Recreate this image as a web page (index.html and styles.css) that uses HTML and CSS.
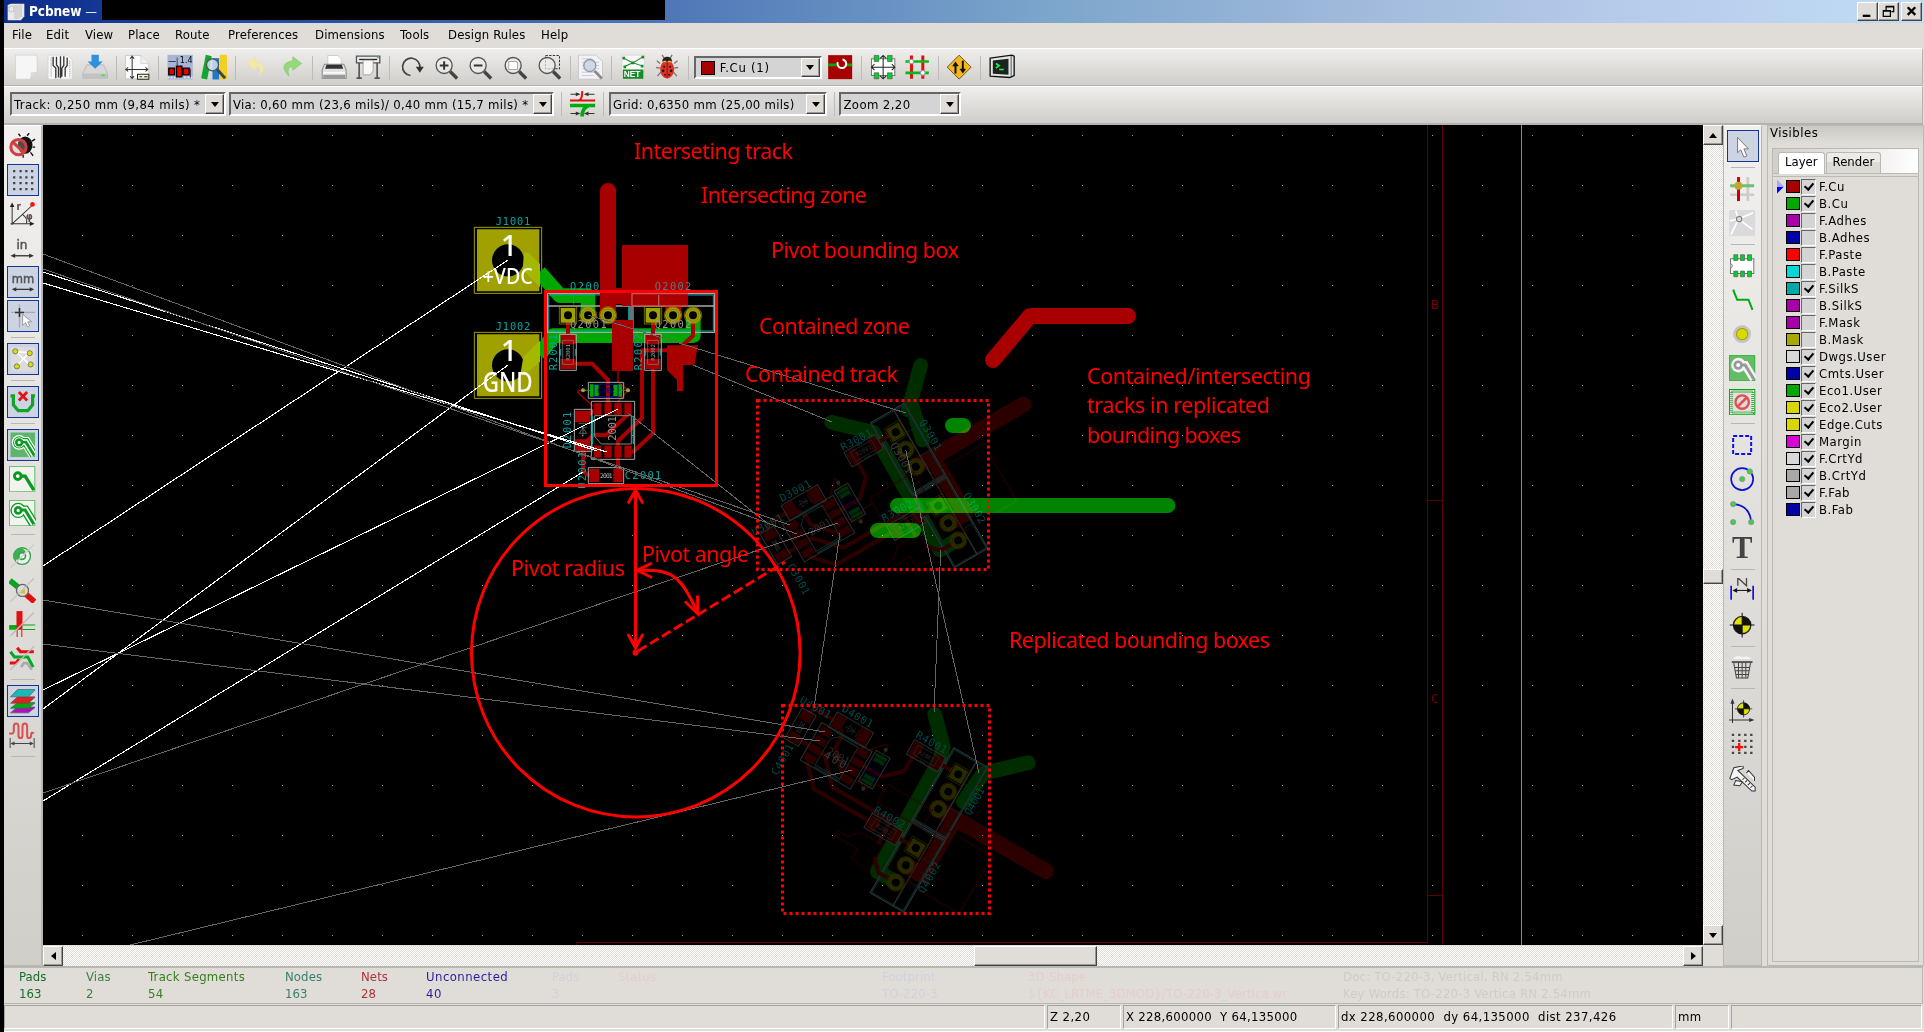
FILE: index.html
```html
<!DOCTYPE html>
<html lang="en">
<head>
<meta charset="utf-8">
<title>Pcbnew</title>
<link rel="stylesheet" href="styles.css">
</head>
<body>
<div class="window">
<header class="titlebar">
  <div class="caption"><svg class="app" viewBox="0 0 54 54"><path d="M2 6 12 2H52V40L42 52H2z" fill="#e9e9e9"/><path d="M24 6V48M30 6V48M36 6V46M42 4V42" stroke="#aaa" stroke-width="2"/><path d="M6 10H20V26H6z" fill="none" stroke="#999" stroke-width="2" stroke-dasharray="3 2"/></svg><b>Pcbnew</b> —</div>
  <div class="redacted"></div>
  <div class="winbtns">
    <span class="raised"><svg viewBox="0 0 20 18"><path d="M5 13.5h8" stroke="#000" stroke-width="2.4"/></svg></span>
    <span class="raised"><svg viewBox="0 0 20 18"><path d="M7.5 8V3.5h8V9H13M4.500 8H12v6H4.500zM7 4h9M4 8.500h8.500" fill="none" stroke="#000" stroke-width="1.300"/></svg></span>
    <span class="raised last"><svg viewBox="0 0 20 18"><path d="M6 4.500l8 8M14 4.500l-8 8" stroke="#000" stroke-width="2.400"/></svg></span>
  </div>
</header>
<nav class="menu"><span>File</span><span>Edit</span><span>View</span><span>Place</span><span>Route</span><span>Preferences</span><span>Dimensions</span><span>Tools</span><span>Design Rules</span><span>Help</span></nav>

<div class="bar main">
  <svg class="ic" viewBox="0 0 78 78"><path d="M7 3H72V54L52 75H7z" fill="#f6f6f6" stroke="#ccc" stroke-width="2"/><path d="M52 75Q56 60 54 56L72 54z" fill="#ddd" stroke="#bbb"/></svg>
  <svg class="ic" viewBox="0 0 78 78"><path d="M3 3H62L75 18V75H3z" fill="#fafafa" stroke="#ccc" stroke-width="2"/><path d="M18 8V34L26 42V72M28 8V32L34 40V70M40 6V72M50 6V34L44 42V68M60 10V34L54 42V68" fill="none" stroke="#333" stroke-width="4"/><path d="M68 20V70M12 10V70" stroke="#888" stroke-width="3" stroke-dasharray="3 3"/></svg>
  <svg class="ic" viewBox="0 0 78 78"><path d="M14 32H64L76 58V72H2V58z" fill="#d8d8d8" stroke="#aaa" stroke-width="2"/><path d="M3 58H75V73H3z" fill="#c2c2c2"/><path d="M28 2H50V22H62L39 44 16 22H28z" fill="#2f8fdd"/><path d="M58 64h10" stroke="#4d4" stroke-width="5"/></svg>
  <i class="sep"></i>
  <svg class="ic" viewBox="0 0 78 78"><path d="M4 4H50L74 28V74H4z" fill="#fbfbfb" stroke="#bbb" stroke-width="2"/><path d="M50 4V28H74" fill="#eee" stroke="#ccc" stroke-width="2"/><path d="M24 8V72M6 46H70M18 14l6-8 6 8M18 66l6 7 6-7M12 40l-7 6 7 6M64 40l7 6-7 6" fill="none" stroke="#333" stroke-width="3"/><path d="M40 60H74V75H40zM46 68h8M60 68h10" fill="#f4f4cf" stroke="#222" stroke-width="3"/></svg>
  <i class="sep"></i>
  <svg class="ic" viewBox="0 0 78 78"><rect x="1" y="2" width="76" height="74" fill="#a8b6d6"/><path d="M1 70H77" stroke="#eee" stroke-width="5" stroke-dasharray="5 5"/><path d="M4 22h22M30 10v24M70 44v26" stroke="#445" stroke-width="3"/><text x="38" y="26" class="tny">1.4</text><path d="M5 42H22V62H5zM28 36H44V68H28zM48 42H66V62H48z" fill="#e60000" stroke="#000" stroke-width="4"/></svg>
  <svg class="ic" viewBox="0 0 78 78"><path d="M14 2 32 6 18 76 0 72z" fill="#12a62e"/><path d="M34 12H54V76H34z" fill="#1f78d0"/><path d="M56 2H78V76H56z" fill="#f2cf24"/><circle cx="34" cy="32" r="18" fill="#cfe0f0" fill-opacity=".85" stroke="#555" stroke-width="4"/><path d="M48 46 72 72" stroke="#444" stroke-width="9"/></svg>
  <i class="sep"></i>
  <svg class="ic" viewBox="0 0 78 78"><path d="M34 8 8 28 34 48V36Q54 36 44 66 78 34 34 22z" fill="#f4e9a4" stroke="#eadd90"/></svg>
  <svg class="ic" viewBox="0 0 78 78"><path d="M44 8 70 28 44 48V38Q24 36 32 66 -2 28 44 20z" fill="#92da7a" stroke="#7cc866" stroke-width="2"/></svg>
  <i class="sep"></i>
  <svg class="ic" viewBox="0 0 78 78"><path d="M20 4H50L60 14V40H20z" fill="#fff" stroke="#bbb" stroke-width="2"/><path d="M10 30H68L75 48V72H3V48z" fill="#e2e2e2" stroke="#888" stroke-width="3"/><path d="M16 32H62L66 44H12z" fill="#333"/><path d="M6 56H72" stroke="#fff" stroke-width="4"/><path d="M6 62H72V73H6z" fill="#999"/></svg>
  <svg class="ic" viewBox="0 0 78 78"><path d="M4 6H74V26H4z" fill="#eee" stroke="#555" stroke-width="4"/><path d="M12 16H66" stroke="#222" stroke-width="4"/><path d="M24 18H54V50L46 62H24z" fill="#f8f8f8" stroke="#888" stroke-width="2"/><path d="M12 26V72M66 26V72M4 72H20M58 72H74" stroke="#555" stroke-width="5"/><circle cx="68" cy="10" r="3" fill="#3d3"/></svg>
  <i class="sep wide"></i>
  <svg class="ic" viewBox="0 0 78 78"><path d="M34 64A26 26 0 1 1 62 42" fill="none" stroke="#444" stroke-width="5"/><path d="M50 38H74L62 56z" fill="#333"/></svg>
  <svg class="ic" viewBox="0 0 78 78"><use href="#mag"/><path d="M20 34H46M33 21V47" stroke="#333" stroke-width="6"/></svg>
  <svg class="ic" viewBox="0 0 78 78"><use href="#mag"/><path d="M20 34H46" stroke="#333" stroke-width="6"/></svg>
  <svg class="ic" viewBox="0 0 78 78"><use href="#mag"/><path d="M20 22H42L46 26V46H20z" fill="#fff" stroke="#aaa" stroke-width="3"/></svg>
  <svg class="ic" viewBox="0 0 78 78"><path d="M28 4H70V44H28z" fill="none" stroke="#333" stroke-width="3" stroke-dasharray="7 4"/><use href="#mag"/></svg>
  <i class="sep thin"></i>
  <svg class="ic" viewBox="0 0 78 78"><path d="M4 3H56L76 22V75H4z" fill="#f2f3f7" stroke="#bbb" stroke-width="2"/><path d="M14 14H46M14 24H66M14 34H66M14 44H66M14 54H66M14 64H50" stroke="#ccd" stroke-width="3"/><circle cx="38" cy="34" r="18" fill="#c6d4ea" fill-opacity=".8" stroke="#999" stroke-width="4"/><path d="M52 50 74 73" stroke="#888" stroke-width="8"/></svg>
  <i class="sep"></i>
  <svg class="ic" viewBox="0 0 78 78"><path d="M5 3H73V75H5z" fill="#f7f7f7" stroke="#ccc" stroke-width="2"/><path d="M10 12 38 26 68 8M38 26 12 38M38 26 68 36" fill="none" stroke="#188a2a" stroke-width="3"/><path d="M7 8h8v8H7zM64 5h8v8h-8zM34 22h8v8h-8zM10 34h8v8h-8zM62 32h8v8h-8z" fill="#188a2a"/><path d="M8 46H70V74H8z" fill="#198a28"/><text x="11" y="69" class="net">NET</text></svg>
  <svg class="ic" viewBox="0 0 78 78"><path d="M18 28 8 20M18 42 6 40M20 54 10 66M60 28 70 20M60 42 72 40M58 54 68 66M30 12 24 2M48 12 54 2" stroke="#777" stroke-width="4"/><ellipse cx="39" cy="46" rx="21" ry="27" fill="#d83428"/><path d="M24 22A15 14 0 0 1 54 22z" fill="#222"/><path d="M28 22h8M42 22h8" stroke="#e8c030" stroke-width="4"/><path d="M39 26V72" stroke="#700" stroke-width="2"/><g fill="#311"><circle cx="30" cy="38" r="3"/><circle cx="48" cy="38" r="3"/><circle cx="27" cy="50" r="4"/><circle cx="51" cy="50" r="4"/><circle cx="33" cy="62" r="3"/><circle cx="45" cy="62" r="3"/></g></svg>
  <i class="sep"></i>
  <div class="combo lay"><span class="sw"></span><span class="t">F.Cu (1)</span><span class="raised dd"></span></div>
  <svg class="ic" viewBox="0 0 78 78"><path d="M3 3H75V75H3z" fill="#a80000"/><path d="M3 32H28M54 32H75" stroke="#0a0" stroke-width="8"/><path d="M32 24a13 13 0 1 0 14-8" fill="none" stroke="#fff" stroke-width="6"/></svg>
  <i class="sep"></i>
  <svg class="ic" viewBox="0 0 78 78"><path d="M4 14H74V64H4z" fill="#fff" stroke="#777" stroke-width="3"/><path class="gp" d="M12 4h14v18H12zM52 4h14v18H52zM12 56h14v18H12zM52 56h14v18H52z"/><path d="M39 4V74M4 39H74M30 13l9-9 9 9M30 65l9 9 9-9M13 30l-9 9 9 9M65 30l9 9-9 9" fill="none" stroke="#222" stroke-width="3"/></svg>
  <svg class="ic" viewBox="0 0 78 78"><path d="M22 4V74M56 4V74" stroke="#e01010" stroke-width="9"/><path d="M4 22H74M4 56H74" stroke="#0b1" stroke-width="8"/><circle cx="22" cy="22" r="7" fill="#fff" stroke="#999" stroke-width="3"/><circle cx="56" cy="56" r="7" fill="#fff" stroke="#999" stroke-width="3"/></svg>
  <i class="sep"></i>
  <svg class="ic" viewBox="0 0 78 78"><path d="M39 3 75 39 39 75 3 39z" fill="#f6b816" stroke="#222" stroke-width="2"/><path d="M28 58V30M50 20V48" stroke="#111" stroke-width="6"/><path d="M18 36 28 22 38 36zM40 44 50 58 60 44z" fill="#111"/></svg>
  <i class="sep"></i>
  <svg class="ic" viewBox="0 0 78 78"><path d="M3 12 68 3 75 6V64L62 70 3 66z" fill="#e6e6e6" stroke="#111" stroke-width="4"/><path d="M66 5V68" stroke="#111" stroke-width="2"/><path d="M11 19 58 14V62L11 59z" fill="#1c2420"/><path d="M20 28 30 34 20 42M30 46H44" fill="none" stroke="#2e4" stroke-width="5"/></svg>
</div>

<div class="bar aux">
  <div class="combo c1"><span class="t">Track: 0,250 mm (9,84 mils) *</span><span class="raised dd"></span></div>
  <div class="combo c2"><span class="t">Via: 0,60 mm (23,6 mils)/ 0,40 mm (15,7 mils) *</span><span class="raised dd"></span></div>
  <i class="sep"></i>
  <svg class="ic" viewBox="0 0 78 78"><path d="M4 9H30M48 9H76M4 67H30M48 67H76" stroke="#333" stroke-width="3"/><path d="M20 3 34 9 20 15zM58 3 44 9 58 15zM20 61 34 67 20 73zM58 61 44 67 58 73z" fill="#333"/><path d="M0 28H78M30 27Q40 24 39 0" stroke="#e01010" stroke-width="6" fill="none"/><path d="M0 43H78M58 44Q38 52 39 76" stroke="#0a1" stroke-width="11" fill="none"/></svg>
  <i class="sep"></i>
  <div class="combo c3"><span class="t">Grid: 0,6350 mm (25,00 mils)</span><span class="raised dd"></span></div>
  <i class="sep"></i>
  <div class="combo c4"><span class="t">Zoom 2,20</span><span class="raised dd"></span></div>
</div>

<main class="work">
<aside class="tools left">
  <svg class="ic" viewBox="0 0 78 78"><path d="M34 10 28 2M54 8 60 0M68 24 78 18M70 42H78M64 58 72 68M42 64V74" stroke="#111" stroke-width="4"/><ellipse cx="48" cy="36" rx="22" ry="26" fill="#111"/><circle cx="28" cy="42" r="23" fill="#bbb" fill-opacity=".35" stroke="#d04040" stroke-width="9"/><path d="M12 28 44 58" stroke="#d04040" stroke-width="9"/></svg>
  <svg class="ic on" viewBox="0 0 78 78"><g fill="#444"><path id="dr" d="M8 8h7v7H8zM28 8h7v7h-7zM46 8h7v7h-7zM64 8h7v7h-7z"/><use href="#dr" y="19"/><use href="#dr" y="37"/><use href="#dr" y="56"/></g></svg>
  <svg class="ic" viewBox="0 0 78 78"><path d="M9 72V12M4 68H70M9 68 68 14M40 40Q56 52 52 66" fill="none" stroke="#333" stroke-width="3"/><path d="M2 18 9 4 16 18zM62 61 76 68 62 75z" fill="#222"/><circle cx="70" cy="10" r="7" fill="#f11"/><text x="22" y="26" class="ri">r</text><text x="50" y="56" class="ri">φ</text></svg>
  <svg class="ic" viewBox="0 0 78 78"><text x="22" y="42" class="un">in</text><path d="M12 62H66" stroke="#333" stroke-width="4"/><path d="M4 62 18 55V69zM74 62 60 55V69z" fill="#333"/></svg>
  <svg class="ic on" viewBox="0 0 78 78"><text x="4" y="42" class="un" textLength="70">mm</text><path d="M12 62H66" stroke="#333" stroke-width="4"/><path d="M4 62 18 55V69zM74 62 60 55V69z" fill="#333"/></svg>
  <svg class="ic on" viewBox="0 0 78 78"><path d="M2 28H78M28 2V76" stroke="#aaa" stroke-width="4"/><path d="M14 28H42M28 14V42" stroke="#333" stroke-width="5"/><path d="M38 34V68L47 60 53 73 60 70 54 57H66z" fill="#fff" stroke="#777" stroke-width="2"/></svg>
  <i class="sep"></i>
  <svg class="ic on" viewBox="0 0 78 78"><rect x="1" y="1" width="76" height="76" rx="6" fill="#dcdcdc"/><path d="M16 16 62 58M58 20 20 60M16 16 60 20" stroke="#fff" stroke-width="5"/><g fill="#dede00" stroke="#777" stroke-width="3"><circle cx="15" cy="15" r="8"/><circle cx="60" cy="21" r="8"/><circle cx="20" cy="62" r="8"/><circle cx="63" cy="56" r="8"/></g></svg>
  <i class="sep"></i>
  <svg class="ic on" viewBox="0 0 78 78"><path d="M0 20H9V48L24 66H54L69 48V20H78" fill="none" stroke="#12a32a" stroke-width="10"/><path d="M26 8 52 34M52 8 26 34" stroke="#e01515" stroke-width="9"/></svg>
  <i class="sep"></i>
  <svg class="ic on" viewBox="0 0 78 78"><path d="M0 0H78V78H0z" fill="#5fb56a"/><circle cx="27" cy="31" r="23" fill="#fff"/><use href="#trk" stroke="#fff" stroke-width="32"/><circle cx="27" cy="31" r="19" fill="#0a9a22"/><use href="#trk" stroke="#0a9a22" stroke-width="25"/><circle cx="27" cy="31" r="16" fill="#fff"/><use href="#trk" stroke="#fff" stroke-width="18"/><use href="#trk" stroke="#0a9a22" stroke-width="9"/><circle cx="27" cy="31" r="9" fill="#fff" stroke="#0a9a22" stroke-width="8"/></svg>
  <svg class="ic" viewBox="0 0 78 78"><path d="M1 1H77V77H1z" fill="#f2f2ee" stroke="#1a2" stroke-width="2"/><use href="#trk" stroke="#0a9a22" stroke-width="10"/><circle cx="26" cy="30" r="10" fill="#fff" stroke="#0a9a22" stroke-width="9"/></svg>
  <svg class="ic" viewBox="0 0 78 78"><path d="M1 1H77V77H1z" fill="#f2f2ee" stroke="#1a2" stroke-width="2"/><circle cx="27" cy="31" r="23" fill="#0a9a22"/><use href="#trk" stroke="#0a9a22" stroke-width="28"/><circle cx="27" cy="31" r="19" fill="#fff"/><use href="#trk" stroke="#fff" stroke-width="20"/><use href="#trk" stroke="#0a9a22" stroke-width="9"/><circle cx="27" cy="31" r="9" fill="#fff" stroke="#0a9a22" stroke-width="8"/></svg>
  <i class="sep"></i>
  <svg class="ic" viewBox="0 0 78 78"><ellipse cx="39" cy="39" rx="25" ry="25" fill="#eee" stroke="#2fa545" stroke-width="4"/><path d="M39 15A24 24 0 0 0 15 50L30 50 50 25z" fill="#3fae52"/><circle cx="39" cy="39" r="10" fill="#fff" stroke="#2fa545" stroke-width="5"/><path d="M4 74 74 4" stroke="#ccc" stroke-width="4"/></svg>
  <svg class="ic" viewBox="0 0 78 78"><path d="M2 10 32 34" stroke="#0aa520" stroke-width="17"/><path d="M44 46 76 74" stroke="#e01010" stroke-width="17"/><circle cx="40" cy="40" r="18" fill="#ddd" stroke="#666" stroke-width="4"/><path d="M32 48 48 34V50z" fill="#d8c020"/><path d="M4 74 74 4" stroke="#bbb" stroke-width="3"/></svg>
  <svg class="ic" viewBox="0 0 78 78"><path d="M0 42H24V56H0z" fill="#0a1"/><path d="M22 0H40V56H22z" fill="#e01010"/><path d="M40 42H78M40 55H78" stroke="#0a1" stroke-width="3"/><path d="M24 56V78M38 56V78" stroke="#e01010" stroke-width="3"/><path d="M4 74 74 4" stroke="#bbb" stroke-width="4"/></svg>
  <svg class="ic" viewBox="0 0 78 78"><path d="M24 8 34 20H74M2 54H20L30 42" fill="none" stroke="#e01010" stroke-width="9"/><path d="M4 20 16 36H56L72 66" fill="none" stroke="#0a2" stroke-width="9"/><path d="M36 66 44 54H54L68 74" fill="none" stroke="#aaa" stroke-width="8"/><path d="M4 74 74 4" stroke="#bbb" stroke-width="4"/></svg>
  <i class="sep"></i>
  <svg class="ic on" viewBox="0 0 78 78"><g stroke="#555" stroke-width="2"><path d="M0 76 22 58H78L56 76z" fill="#b010c0"/><path d="M0 62 22 44H78L56 62z" fill="#0a1"/><path d="M0 46 22 26H78L56 46z" fill="#e02020"/><path d="M0 26 22 3H78L56 26z" fill="#1ab8b8"/></g></svg>
  <svg class="ic" viewBox="0 0 78 78"><path d="M0 34H10Q14 34 14 24V14Q14 4 21 4T28 14V40Q28 48 34 48T40 40V14Q40 4 47 4T54 14V40Q54 48 60 48T66 38 74 34" fill="none" stroke="#d85050" stroke-width="6"/><path d="M3 48V78M75 48V78M10 64H68" stroke="#444" stroke-width="3"/><path d="M4 64 16 58V70zM74 64 62 58V70z" fill="#444"/></svg>
  <i class="sep"></i>
</aside>

<section class="view">
<svg class="board" viewBox="43 125 1660 820">
<defs>
  <pattern id="dots" x="482" y="185" width="50" height="50" patternUnits="userSpaceOnUse"><rect width="1" height="1" fill="#a8a8a8"/></pattern>
  <g id="mag"><circle cx="33" cy="34" r="24" fill="#eee" fill-opacity=".7" stroke="#555" stroke-width="4"/><path d="M51 52 72 73" stroke="#444" stroke-width="10"/></g>
  <path id="trk" d="M28 30H48L74 72" fill="none"/>
  <g id="thru"><circle r="24" fill="#a0a000"/><circle r="26" fill="none" stroke="#a80" stroke-width="2"/><circle r="18" fill="none" stroke="#777400" stroke-width="2"/><circle r="12" fill="#000"/></g>
  <g id="sq"><path d="M-22-22H22V22H-22z" fill="#a0a000"/><path d="M-26-26H26V26H-26z" fill="none" stroke="#a0a000" stroke-width="2"/><circle r="12" fill="#000"/></g>
  <!-- resistor: two pads and outline, origin at centre -->
  <g id="res"><path d="M-22-52H22V-24H-22zM-22 20H22V50H-22z" fill="#a80000"/><path d="M-25-54H25V54H-25z" fill="none" stroke="#a8a8a8" stroke-width="3"/><path d="M-16-36H16V36H-16z" fill="none" stroke="#888" stroke-width="2"/><path d="M-22-10V10M22-10V10" stroke="#00a8a8" stroke-width="3"/></g>
  <g id="silk" fill="none">
    <path d="M262 371H510V487H262zM516 371H764V487H516z" stroke="#a8a8a8" stroke-width="4"/>
    <path d="M266 375H506V483H266zM520 375H760V483H520z" stroke="#00a8a8" stroke-width="3"/>
    <path d="M264 408H508M518 408H762" stroke="#a8a8a8" stroke-width="4"/><path d="M341 375V408M423 375V408M596 375V408M677 375V408" stroke="#00a8a8" stroke-width="2"/>
  </g>
  <g id="parts">
    <g fill="none" stroke="#a80000" stroke-width="12" stroke-linejoin="round" stroke-linecap="round">
      <path d="M324 436V510M324 581H396L444 630V715M579 436V500M579 590V790L520 845H504M620 541H546V744L474 813V915M699 450V497L668 526M504 733 438 795H400L369 825M369 840V905L385 915H400M369 740 412 718"/>
      <path stroke-width="4" d="M474 603V635L504 661 474 695V710M369 661H354V668L410 718"/>
    </g>
    <use href="#res" x="324" y="547"/><use href="#res" x="579" y="547"/>
    <path d="M345 722H390V757H345zM345 808H390V842H345zM388 897H417V936H388zM460 897H488V936H460z" fill="#a80000"/>
    <path d="M343 718H396V844H343zM385 893H491V941H385zM385 637H491V685H385z" fill="none" stroke="#a8a8a8" stroke-width="3"/>
    <path d="M356 760H382M369 765V800M358 772H380M358 790 369 774 380 790z" fill="none" stroke="#888" stroke-width="2"/>
    <path d="M402 699h22v36h-22zM433 699h22v36h-22zM463 699h22v36h-22zM493 699h22v36h-22zM402 827h22v36h-22zM433 827h22v36h-22zM463 827h22v36h-22zM493 827h22v36h-22z" fill="#a80000" stroke="#600000" stroke-width="2"/>
    <path d="M394 694H524V868H394z" fill="none" stroke="#a8a8a8" stroke-width="3"/>
    <path d="M397 737V822M520 737V822" stroke="#00a8a8" stroke-width="4"/><path d="M404 737H514V822H424L404 800z" fill="none" stroke="#888" stroke-width="3"/>
    <path d="M390 643H416V680H390zM460 643H486V680H460z" fill="#00a800"/><path d="M402 643H474V680H402z" fill="none" stroke="#0000a8" stroke-width="3"/><path d="M369 661H390M486 661H504" stroke="#00a800" stroke-width="3"/>
    <text x="412" y="668" class="k" fill="#0000a8" font-size="20" textLength="52">C2002</text>
    <circle cx="369" cy="661" r="6" fill="#aa9c50"/><circle cx="504" cy="661" r="6" fill="#aa9c50"/>
    <text x="420" y="923" class="k" fill="#bbb" font-size="19" textLength="38">2001</text>
    <text transform="translate(330 572) rotate(-90)" class="k" fill="#999" font-size="17" textLength="50">R2001</text>
    <text transform="translate(585 572) rotate(-90)" class="k" fill="#999" font-size="17" textLength="50">R2002</text>
    <text transform="translate(468 812) rotate(-90)" class="k" fill="#999" font-size="32" textLength="74">2001</text>
  </g>
  <g id="bigtracks" fill="none" stroke="#a80000" stroke-width="48" stroke-linecap="round" stroke-linejoin="round"><path d="M444 63V436M444 378H640V436"/></g>
  <g id="pins"><use href="#sq" x="324" y="436"/><use href="#thru" x="384" y="436"/><use href="#thru" x="444" y="436"/><use href="#sq" x="579" y="436"/><use href="#thru" x="639" y="436"/><use href="#thru" x="699" y="436"/></g>
  <!-- replicated channel, same parts with unfilled zones -->
  <g id="replica">
    <g transform="translate(460 170) scale(.33333)">
      <use href="#bigtracks"/><use href="#silk"/><use href="#parts"/><use href="#pins"/>
      <path d="M486 225H684V408H486zM456 450H519V603H456zM621 526H714L703 585H669V663H651V630L621 600z" fill="none" stroke="#a80000" stroke-width="7" stroke-dasharray="2 3"/>
    </g>
  </g>
</defs>
<rect x="43" y="125" width="1660" height="820" fill="#000"/>
<rect x="43" y="125" width="1660" height="820" fill="url(#dots)"/>
<g fill="none" stroke="#5c0000" shape-rendering="crispEdges"><path d="M1427.500 125V942.500H576.500V945M1442.500 125V945M1427 500.500H1442M1427 895.500H1442"/><path d="M1521.500 125V945" stroke="#888"/></g>
<text x="1431" y="309" class="k" fill="#780000" font-size="13">B</text><text x="1431" y="703" class="k" fill="#780000" font-size="13">C</text>

<!-- first replica -->
<g opacity=".27">
  <g transform="translate(740 340) scale(.33333)" fill="none" stroke="#00a800" stroke-width="44" stroke-linecap="round" stroke-linejoin="round"><path d="M542 76 512 185 548 300M512 185 505 210M275 247 400 277 600 630 650 600"/></g>
  <use href="#replica" transform="translate(2 6.700) rotate(60 635.500 652.500)"/>
</g>
<g class="k" fill="#004b4b" font-size="10.500">
  <text transform="translate(843 451) rotate(-28)" textLength="34">R3001</text><text transform="translate(782 502) rotate(-28)" textLength="34">D3001</text><text transform="translate(754 536) rotate(-28)" textLength="34">U3001</text><text transform="translate(787 566) rotate(60)" textLength="34">C3001</text><text transform="translate(919 422) rotate(60)" textLength="34">Q3001</text><text transform="translate(963 495) rotate(60)" textLength="34">Q3002</text><text transform="translate(884 522) rotate(-28)" textLength="34">R3002</text>
  <text transform="translate(890 445) rotate(60)" fill="#3c3c3c" textLength="34">Q3001</text>
</g>
<!-- second replica -->
<g opacity=".27">
  <g transform="translate(760 690) scale(.33333)" fill="none" stroke="#00a800" stroke-width="44" stroke-linecap="round" stroke-linejoin="round"><path d="M524 73 550 170 540 210 352 545 400 572M805 218 670 250 610 335"/></g>
  <use href="#replica" transform="translate(-3 11.700) rotate(120 635.500 652.500)"/>
</g>
<g class="k" fill="#004b4b" font-size="10.500">
  <text transform="translate(915 737) rotate(30)" textLength="34">R4001</text><text transform="translate(841 711) rotate(30)" textLength="34">D4001</text><text transform="translate(799 702) rotate(30)" textLength="34">U4001</text><text transform="translate(777 776) rotate(-60)" textLength="34">C4001</text><text transform="translate(970 816) rotate(-60)" textLength="30">Q4001</text><text transform="translate(924 894) rotate(-60)" textLength="34">Q4002</text><text transform="translate(873 812) rotate(30)" textLength="34">R4002</text>
  <text transform="translate(823 757) rotate(30)" fill="#3c3c3c" textLength="24">400</text>
</g>

<g fill="none" stroke="#008400" stroke-width="15" stroke-linecap="round" class="scr"><path d="M897.500 505.500H1168M952.500 425.500H963.500M877.500 530.500H913.500"/></g>
<path d="M993 360 1030 316H1128" fill="none" stroke="#a80000" stroke-width="16" stroke-linecap="round" stroke-linejoin="round"/>

<!-- connectors and source channel -->
<g transform="translate(460 170) scale(.33333)">
  <g id="conn"><path d="M43 172H245V370H43z" fill="none" stroke="#a0a000" stroke-width="3"/><path d="M51 178H238V364H51z" fill="#a0a000"/><circle cx="144" cy="271" r="48" fill="#000"/></g>
  <use href="#conn" y="315"/>
  <g fill="none" stroke="#00a800" stroke-width="44" stroke-linejoin="round"><path d="M238 306 300 377H384V436M238 556 280 497H700V436"/></g>
  <path d="M188 300 192 248H205L240 282V352z" fill="#a4b800"/><path d="M180 620 190 560 240 512V575L200 610z" fill="#a4b800"/>
  <use href="#silk"/>
  <use href="#bigtracks"/>
  <path d="M486 225H684V408H486zM456 450H519V603H456zM621 526H714L703 585H669V663H651V630L621 600z" fill="#a80000"/>
  <path d="M516 408V371H684M516 408H684M596 375V408" fill="none" stroke="#c25a5a" stroke-width="4"/>
  <use href="#parts"/><use href="#pins"/>
  <g class="k" fill="#00a8a8" font-size="31">
    <text x="107" y="164" textLength="104">J1001</text><text x="107" y="479" textLength="104">J1002</text>
    <text x="330" y="361" textLength="88">Q200</text><text x="584" y="361" textLength="110" fill="#66767a">Q2002</text>
    <text x="494" y="928" textLength="110">C2001</text>
    <text transform="translate(292 601) rotate(-90)" textLength="108">R2001</text><text transform="translate(547 601) rotate(-90)" textLength="110">R2002</text>
    <text transform="translate(334 835) rotate(-90)" textLength="110">D2001</text><text transform="translate(379 956) rotate(-90)" textLength="110">U2001</text>
    <text x="330" y="474" textLength="110" fill="#999">Q2001</text><text x="584" y="474" textLength="110" fill="#999">Q2002</text>
  </g>
  <g class="pad" fill="#fff"><text x="122" y="258" font-size="88">1</text><text x="122" y="573" font-size="88">1</text><text x="68" y="342" font-size="65" textLength="150" lengthAdjust="spacingAndGlyphs">+VDC</text><text x="68" y="665" font-size="82" textLength="150" lengthAdjust="spacingAndGlyphs">GND</text></g>
</g>

<g stroke="#fff" stroke-width="1.100" shape-rendering="crispEdges"><path d="M43 566 508 260M43 709 508 365M43 272 597 451M43 283 607 452M43 690 618 409M43 801 583 472"/></g>
<g stroke="#666" shape-rendering="crispEdges"><path d="M43 254 797 534M43 269 790 525M588 315 906 413M693 365 832 422M628 413 767 523M43 793 838 523M840 533 814 708M905.700 450 979 773M940.700 550 934 713M43 600 825 732M43 644 820 741M130 945 852 770"/></g>

<g fill="none" stroke="#f00" stroke-width="3">
  <rect x="545.500" y="291.500" width="171" height="194"/>
  <rect x="757.500" y="400.500" width="231" height="169" stroke-dasharray="3 3"/>
  <rect x="782.500" y="705.500" width="207" height="208" stroke-dasharray="3 3"/>
  <circle cx="635.800" cy="652.700" r="164.300"/>
  <path d="M635.500 490V648M628 503.500 635.500 490 643 503.500M628 634 635.500 648 643 634"/>
  <path d="M638 651 785 562" stroke-dasharray="10 4"/>
  <path d="M637 570.300C672 569 681 575 698 614M652 563 637 570.300 652 577.500M685 601.500 698 614 697.500 595.500"/>
</g>
<circle cx="635.500" cy="652.700" r="3" fill="#f00"/>
<g class="note">
  <text x="634" y="159" textLength="159">Interseting track</text><text x="701" y="203" textLength="166">Intersecting zone</text><text x="771" y="258" textLength="188">Pivot bounding box</text>
  <text x="759" y="334" textLength="151">Contained zone</text><text x="745" y="382" textLength="153">Contained track</text>
  <text x="1087" y="384" textLength="224">Contained/intersecting</text><text x="1087" y="413" textLength="183">tracks in replicated</text><text x="1087" y="443" textLength="154">bounding boxes</text>
  <text x="511" y="576" textLength="114">Pivot radius</text><text x="642" y="562" textLength="107">Pivot angle</text><text x="1009" y="648" textLength="261">Replicated bounding boxes</text>
</g>
</svg>
<div class="vscroll"><span class="raised up"></span><span class="raised vthumb"></span><span class="raised down"></span></div>
<div class="hscroll"><span class="raised lft"></span><span class="raised hthumb"></span><span class="raised rgt"></span></div>
<div class="corner"></div>
</section>

<aside class="tools right">
  <svg class="ic on" viewBox="0 0 78 78"><path d="M22 12V60L32 51 42 74 51 70 42 48H56z" fill="#fafafa" stroke="#777" stroke-width="3"/></svg>
  <i class="sep"></i>
  <svg class="ic" viewBox="0 0 78 78"><path d="M56 3V75M3 56H75" stroke="#ccc" stroke-width="8"/><path d="M3 29H75" stroke="#6dc06d" stroke-width="9"/><path d="M28 3V75" stroke="#d00000" stroke-width="9"/><circle cx="28" cy="29" r="12" fill="#c0a830"/></svg>
  <svg class="ic" viewBox="0 0 78 78"><rect width="78" height="78" rx="6" fill="#dadada"/><path d="M28 27 5 74M28 27 72 8M28 27 70 58M28 27 20 2M28 27 2 32" stroke="#fff" stroke-width="5"/><circle cx="30" cy="27" r="8" fill="#ddd" stroke="#777" stroke-width="3"/></svg>
  <i class="sep"></i>
  <svg class="ic" viewBox="0 0 78 78"><path d="M4 17H74V61H4z" fill="#fff" stroke="#777" stroke-width="3"/><path d="M4 32a6 6 0 0 1 0 12" fill="#ccc" stroke="#777" stroke-width="2"/><path class="gp" d="M14 5h12v17H14zM34 5h12v17H34zM55 5h12v17H55zM14 54h12v17H14zM34 54h12v17H34zM55 54h12v17H55z"/></svg>
  <svg class="ic" viewBox="0 0 78 78"><path d="M12 8 24 38H58L70 68" fill="none" stroke="#0a1" stroke-width="6"/></svg>
  <svg class="ic" viewBox="0 0 78 78"><circle cx="39" cy="39" r="27" fill="#c4c4c4"/><circle cx="39" cy="39" r="17" fill="#dada00" stroke="#a0a000" stroke-width="3"/></svg>
  <svg class="ic" viewBox="0 0 78 78"><path d="M1 1H77V77H1z" fill="#66bb66" stroke="#0a1" stroke-width="2"/><use href="#trk" stroke="#f4f4f4" stroke-width="24"/><circle cx="28" cy="30" r="22" fill="#f4f4f4"/><use href="#trk" stroke="#999" stroke-width="9"/><circle cx="27" cy="30" r="10" fill="#fff" stroke="#999" stroke-width="8"/></svg>
  <svg class="ic" viewBox="0 0 78 78"><path d="M1 1H77V77H1z" fill="#fff" stroke="#0a1" stroke-width="3"/><path d="M7 7H71V71H7z" fill="#e4e0dc" stroke="#3aaa44" stroke-width="9" stroke-dasharray="3 3"/><circle cx="39" cy="39" r="20" fill="#ddd" stroke="#e05050" stroke-width="7"/><path d="M26 52 52 26" stroke="#e05050" stroke-width="8"/></svg>
  <i class="sep"></i>
  <svg class="ic" viewBox="0 0 78 78"><path d="M12 12H66V66H12z" fill="none" stroke="#1010e0" stroke-width="6" stroke-dasharray="12 6"/></svg>
  <svg class="ic" viewBox="0 0 78 78"><circle cx="39" cy="39" r="33" fill="none" stroke="#1010d0" stroke-width="5"/><circle cx="39" cy="39" r="8" class="gd"/><circle cx="62" cy="16" r="8" class="gd"/></svg>
  <svg class="ic" viewBox="0 0 78 78"><path d="M12 12Q60 14 66 64" fill="none" stroke="#1010d0" stroke-width="5"/><circle cx="12" cy="12" r="8" class="gd"/><circle cx="12" cy="66" r="8" class="gd"/><circle cx="66" cy="66" r="8" class="gd"/></svg>
  <svg class="ic" viewBox="0 0 78 78"><text x="39" y="70" class="tee">T</text></svg>
  <i class="sep"></i>
  <svg class="ic" viewBox="0 0 78 78"><path d="M26 26V2L52 26V2" fill="none" stroke="#444" stroke-width="4"/><path d="M6 26V68M72 26V68" stroke="#1010e0" stroke-width="5"/><path d="M14 40H64" stroke="#111" stroke-width="3"/><path d="M10 40 24 33V47zM68 40 54 33V47z" fill="#111"/></svg>
  <svg class="ic" viewBox="0 0 78 78"><use href="#tgt"/></svg>
  <i class="sep"></i>
  <svg class="ic" viewBox="0 0 78 78"><path d="M10 16Q20 0 40 8 60 2 68 16z" fill="#f4f4f4" stroke="#ccc"/><path d="M8 24H70" stroke="#555" stroke-width="6"/><path d="M14 27 22 72H56L64 27M28 27V72M39 27V72M50 27V72M16 40H62M18 50H60M20 61H58" fill="none" stroke="#444" stroke-width="3"/></svg>
  <i class="sep"></i>
  <svg class="ic" viewBox="0 0 78 78"><path d="M10 78V14M0 69H66" stroke="#333" stroke-width="3"/><path d="M4 20 10 4 16 20zM60 63 76 69 60 75z" fill="#333"/><use href="#tgt" transform="translate(16 8) scale(.7)"/></svg>
  <svg class="ic" viewBox="0 0 78 78"><g fill="#444"><path id="dq" d="M8 8h7v7H8zM27 8h7v7h-7zM45 8h7v7h-7zM63 8h7v7h-7z"/><use href="#dq" y="18"/><use href="#dq" y="36"/><use href="#dq" y="54"/></g><path d="M18 48H42M30 36V60" stroke="#f01010" stroke-width="7"/></svg>
  <svg class="ic" viewBox="0 0 78 78"><path d="M2 40 14 8 42 2V10L26 16 78 66V78H68L24 36 8 44zM52 24 58 16 76 36V48M20 46 40 50 32 62 14 60z" fill="#f4f4f4" stroke="#333" stroke-width="3"/><path d="M40 44l6-6M48 52l6-6M56 60l6-6M64 68l6-6" stroke="#333" stroke-width="3"/></svg>
  <svg width="0" height="0"><defs><g id="tgt"><circle cx="39" cy="39" r="26" fill="#e2e200" stroke="#222" stroke-width="4"/><path d="M39 39V13A26 26 0 0 1 65 39zM39 39V65A26 26 0 0 1 13 39z" fill="#111"/><path d="M39 2V76M2 39H76" stroke="#111" stroke-width="3"/></g></defs></svg>
</aside>

<aside class="visibles">
  <h2>Visibles</h2>
  <div class="book">
    <div class="tabs"><span class="tab active">Layer</span><span class="tab">Render</span></div>
    <ul>
      <li class="cur"><i class="s r"></i><b class="x c"></b>F.Cu</li>
      <li><i class="s g"></i><b class="x c"></b>B.Cu</li>
      <li><i class="s m"></i><b class="x"></b>F.Adhes</li>
      <li><i class="s b"></i><b class="x"></b>B.Adhes</li>
      <li><i class="s rr"></i><b class="x"></b>F.Paste</li>
      <li><i class="s cc"></i><b class="x"></b>B.Paste</li>
      <li><i class="s t"></i><b class="x c"></b>F.SilkS</li>
      <li><i class="s m"></i><b class="x"></b>B.SilkS</li>
      <li><i class="s m"></i><b class="x"></b>F.Mask</li>
      <li><i class="s o"></i><b class="x"></b>B.Mask</li>
      <li><i class="s l"></i><b class="x c"></b>Dwgs.User</li>
      <li><i class="s b"></i><b class="x c"></b>Cmts.User</li>
      <li><i class="s g"></i><b class="x c"></b>Eco1.User</li>
      <li><i class="s y"></i><b class="x c"></b>Eco2.User</li>
      <li><i class="s y"></i><b class="x c"></b>Edge.Cuts</li>
      <li><i class="s mm"></i><b class="x c"></b>Margin</li>
      <li><i class="s l"></i><b class="x c"></b>F.CrtYd</li>
      <li><i class="s d"></i><b class="x c"></b>B.CrtYd</li>
      <li><i class="s d"></i><b class="x c"></b>F.Fab</li>
      <li><i class="s b"></i><b class="x c"></b>B.Fab</li>
    </ul>
  </div>
</aside>
</main>

<section class="info">
  <div class="i1">Pads<br>163</div><div class="i2">Vias<br>2</div><div class="i3">Track Segments<br>54</div><div class="i4">Nodes<br>163</div><div class="i5">Nets<br>28</div><div class="i6">Unconnected<br>40</div>
  <div class="a">Pads<br>3</div><div class="p">Status<br>&nbsp;</div><div class="a">Footprint<br>TO-220-3</div><div class="p">3D-Shape<br>${KC_LRTME_3DMOD}/TO-220-3_Vertica.wr</div><div class="n">Doc: TO-220-3, Vertical, RN 2.54mm<br>Key Words: TO-220-3 Vertica RN 2.54mm</div>
</section>
<footer class="status"><span></span><span>Z 2,20</span><span>X 228,600000&nbsp; Y 64,135000</span><span>dx 228,600000&nbsp; dy 64,135000&nbsp; dist 237,426</span><span>mm</span><span></span></footer>
</div>
</body>
</html>
```
FILE: styles.css
```css
* { box-sizing: border-box; }
body { margin: 0; background: #000; color: #000; font: 13px/17px "DejaVu Sans Condensed", "DejaVu Sans", sans-serif; overflow: hidden; }
.window { margin-left: 4px; width: 1920px; height: 1032px; display: flex; flex-direction: column; background: #e0ddd8; }
svg { display: block; flex: none; }

.titlebar { height: 23px; flex: none; display: flex; align-items: flex-start; color: #fff; background: linear-gradient(90deg, #0c2c8a 0, #163a95 6%, #5078b8 35%, #7ba5cb 54%, #a4bcdd 72%, #b4cbea 84%, #c2dcf5 100%); }
.caption { width: 98px; height: 23px; display: flex; align-items: center; gap: 4px; padding-left: 3px; overflow: hidden; }
.app { width: 18px; height: 18px; }
.caption b { font-size: 13.5px; letter-spacing: -.1px; }
.redacted { width: 563px; height: 20px; background: #000; }
.winbtns { margin-left: auto; display: flex; padding: 2px 2px 0 0; }
.winbtns .raised { width: 21px; height: 19px; }
.winbtns .last { margin-left: 2px; }
.raised { background: #e0ddd8; border: 1px solid; border-color: #fff #444 #444 #fff; box-shadow: inset -1px -1px 0 #999; flex: none; }

.menu { height: 25px; flex: none; padding: 3px 0 0 8px; display: grid; grid-template-columns: 34px 39px 43px 47px 53px 87px 85px 48px 93px 60px; white-space: nowrap; line-height: 18px; letter-spacing: .15px; }

.bar { flex: none; display: flex; align-items: center; background: linear-gradient(#efeeec, #cfceca); border-top: 1px solid #fff; border-bottom: 1px solid #b4b3af; border-right: 1px solid #b4b3af; margin-right: 1px; padding-left: 5px; }
.main { height: 38px; padding-top: 1px; }
.aux { height: 39px; border-bottom-width: 2px; padding: 0 0 2px 6px; }
.ic { width: 34.300px; height: 34.300px; padding: 4.150px; }
.bar .sep { flex: none; width: 1px; height: 24px; background: #bbb; margin: 0 3.700px; }
.bar .wide { margin-right: 4.700px; }
.bar .thin { margin-right: 2.200px; }
.combo { display: flex; align-items: center; justify-content: space-between; height: 24px; flex: none; background: #d4d4d4; border: 2px solid; border-color: #666 #fff #fff #666; padding-left: 2px; white-space: nowrap; }
.combo .t { padding-top: 1px; }
.lay { width: 128px; height: 23px; margin: 0 1px 0 1px; justify-content: flex-start; padding-left: 5px; }
.lay .t { padding-left: 5px; flex: 1; letter-spacing: .7px; padding-top: 0; }
.sw { width: 14px; height: 14px; background: #a80000; border: 1px solid #000; }
.c1 { width: 216px; margin-right: 3px; letter-spacing: .42px; }
.c2 { width: 325px; margin-right: 3px; letter-spacing: .3px; }
.c3 { width: 218px; margin-left: 1px; margin-right: 3px; letter-spacing: .28px; }
.c4 { width: 122px; margin-left: 1px; letter-spacing: .4px; }
.dd { width: 19px; height: 20px; display: flex; align-items: center; justify-content: center; }
.lay .dd { height: 19px; }
.dd::after { content: ""; border: 4.500px solid transparent; border-top: 5px solid #000; border-bottom: 0; }
.tny { font: 24px "DejaVu Sans"; }
.net { font: bold 25px "Liberation Sans"; fill: #fff; }
.ri { font: bold 30px "DejaVu Sans Condensed"; fill: #5b4a4a; }
.un { font: 36px "DejaVu Sans"; fill: #555; stroke: #555; stroke-width: 1.5; }
.tee { font: bold 92px "Liberation Serif", serif; fill: #444; text-anchor: middle; }
.gp { fill: #00d22c; stroke: #555; stroke-width: 2; }
.gd { fill: #3fcf50; stroke: #888; stroke-width: 2; }

.work { height: 841px; flex: none; display: flex; }
.tools { display: flex; flex-direction: column; align-items: center; border: 1px solid #b8b7b3; border-top-color: #fff; background: linear-gradient(#f1f0ee, #cfcec9); }
.tools .ic { height: 34.180px; padding: 4.090px 4.150px; }
.tools .on { width: 32px; height: 32px; padding: 2.500px; margin: 1.090px; background: #ccd3e2; border: 1px solid #17358c; }
.tools .sep { flex: none; width: 24px; height: 1px; background: #b8b7b3; margin: 3.800px 0; }
.left { width: 39px; padding-top: 2.500px; border-left: 0; border-right-width: 2px; }
.right { width: 39px; padding-top: 3px; }
.view { width: 1680px; display: grid; grid-template: 820px 21px / 1660px 20px; }
.board { width: 1660px; height: 820px; }
.vscroll, .hscroll { background: repeating-conic-gradient(#fff 0 25%, #e0ddd8 0 50%) 0 0 / 2px 2px; display: flex; justify-content: space-between; }
.vscroll { flex-direction: column; }
.hscroll { height: 20px; margin-top: 1px; }
.up, .down, .lft, .rgt { width: 20px; height: 20px; display: flex; align-items: center; justify-content: center; }
.vthumb { height: 15px; margin-top: 83px; }
.hthumb { width: 123px; margin-left: 324px; }
.up::after, .down::after, .lft::after, .rgt::after { content: ""; border: 4.500px solid transparent; }
.up::after { border-bottom: 5px solid #000; border-top: 0; }
.down::after { border-top: 5px solid #000; border-bottom: 0; }
.lft::after { border-right: 5px solid #000; border-left: 0; }
.rgt::after { border-left: 5px solid #000; border-right: 0; }

.k { font-family: "DejaVu Sans Mono", monospace; }
.pad { font-family: "Noto Sans", sans-serif; font-weight: 500; }
.scr { mix-blend-mode: screen; }
.note { font: 21.500px "Noto Sans", sans-serif; fill: #f00; }

.visibles { width: 157px; margin-left: 5px; border: 1px solid #bbb9b4; }
.visibles h2 { margin: 0; height: 18px; padding-left: 2px; font: inherit; line-height: 14px; letter-spacing: .5px; background: linear-gradient(#cbc9c4, #e0ddd8); }
.book { height: 814px; margin: 4px 4px 0 4px; border: 1px solid #bbb9b4; }
.tabs { display: flex; align-items: flex-end; gap: 1px; height: 25px; padding-left: 5px; border-bottom: 1px solid #bbb9b4; background: linear-gradient(100deg, #d0cec9, #e4e2de 40%, #fff); }
.tab { height: 21px; padding: 1px 6px 0; line-height: 16px; border: 1px solid #bbb9b4; border-bottom: 0; border-radius: 3px 3px 0 0; background: linear-gradient(#ecebe8 45%, #dcdad5 45%); }
.tab.active { background: #fff; height: 22px; margin-bottom: -1px; }
.visibles ul { list-style: none; margin: 2px 0 0; padding: 1px 0 0 13px; border-top: 1px solid #bbb9b4; }
.visibles li { height: 17px; display: flex; align-items: center; white-space: nowrap; letter-spacing: .5px; }
.cur::before { content: ""; width: 7px; height: 14px; margin: 0 2px 0 -9px; background: linear-gradient(#a8a8ff 50%, #00f 50%); clip-path: polygon(0 0, 100% 50%, 0 100%); }
.s { width: 14px; height: 13px; border: 1px solid #000; margin-right: 1px; }
.x { width: 15px; height: 16px; background: #d4d4d4; border: 1px solid; border-color: #666 #fff #fff #666; margin-right: 3px; display: flex; }
.c::after { content: ""; width: 4px; height: 7px; margin: 1px 0 0 4px; border: solid #000; border-width: 0 2px 2px 0; transform: rotate(40deg); }
.r { background: #a80000; }
.g { background: #00a800; }
.m { background: #a800a8; }
.b { background: #0000a8; }
.rr { background: #f00; }
.cc { background: #00d8d8; }
.s.t { background: #00a8a8; }
.o { background: #a8a800; }
.l { background: #d8d8d8; }
.y { background: #d8d800; }
.mm { background: #d800d8; }
.d { background: #a8a8a8; }

.info { height: 38px; flex: none; border: 1px solid #b8b6b1; border-left: 0; display: grid; grid-template-columns: 67px 62px 137px 76px 65px 126px 66px 264px 146px 315px auto; padding: 1px 0 0 15px; white-space: nowrap; margin-right: 1px; border-top-width: 2px; letter-spacing: .1px; }
.info div { margin-top: -1px; }
.i1 { color: #15702b; } .i2 { color: #3c8040; } .i3 { color: #357f1c; } .i4 { color: #36806c; } .i5 { color: #aa3438; }
.info .i3 { letter-spacing: .3px; }
.info .i6 { color: #2b1c9c; letter-spacing: .45px; }
.a { color: #d2d0da; } .p { color: #e4ceca; } .n { color: #cfccc8; }
.info .n { letter-spacing: .2px; }
.status { height: 28px; flex: none; padding: 1px 0 4px; display: grid; grid-template-columns: 1043px 76px 215px 337px 56px auto; border-bottom: 1px solid #fff; white-space: nowrap; letter-spacing: .42px; }
.status span { border: 1px solid; border-color: #a5a39e #fff #fff #a5a39e; margin: 0 2px 0 0; padding-left: 2px; line-height: 22px; }
.status span:nth-child(3) { letter-spacing: .3px; }
```
